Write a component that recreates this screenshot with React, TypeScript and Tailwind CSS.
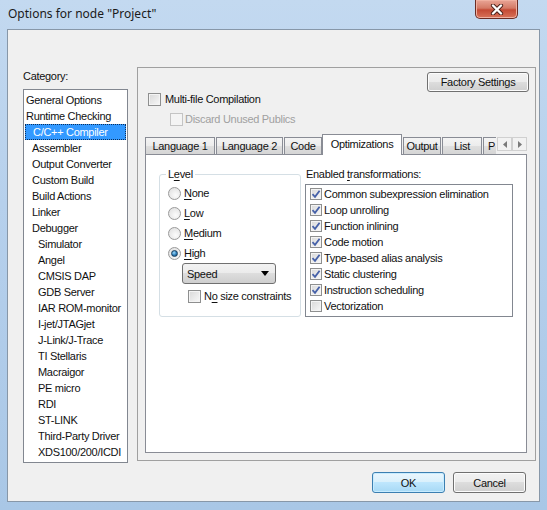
import React from 'react';

type TCategory = [string, number];

const CATEGORIES: TCategory[] = [
  ['General Options', 0],
  ['Runtime Checking', 0],
  ['C/C++ Compiler', 1],
  ['Assembler', 1],
  ['Output Converter', 1],
  ['Custom Build', 1],
  ['Build Actions', 1],
  ['Linker', 1],
  ['Debugger', 1],
  ['Simulator', 2],
  ['Angel', 2],
  ['CMSIS DAP', 2],
  ['GDB Server', 2],
  ['IAR ROM-monitor', 2],
  ['I-jet/JTAGjet', 2],
  ['J-Link/J-Trace', 2],
  ['TI Stellaris', 2],
  ['Macraigor', 2],
  ['PE micro', 2],
  ['RDI', 2],
  ['ST-LINK', 2],
  ['Third-Party Driver', 2],
  ['XDS100/200/ICDI', 2],
];

const INDENT = ['pl-[1px]', 'pl-[7px]', 'pl-[13px]'];

const TRANSFORMS: [string, boolean][] = [
  ['Common subexpression elimination', true],
  ['Loop unrolling', true],
  ['Function inlining', true],
  ['Code motion', true],
  ['Type-based alias analysis', true],
  ['Static clustering', true],
  ['Instruction scheduling', true],
  ['Vectorization', false],
];

const BTN =
  'rounded-[3px] border border-[#707070] bg-[linear-gradient(to_bottom,#f2f2f2_0%,#ebebeb_50%,#dddddd_50%,#cfcfcf_100%)] shadow-[inset_0_0_0_1px_#fcfcfc]';

function CheckBox({
  checked,
  disabled,
  small,
}: {
  checked?: boolean;
  disabled?: boolean;
  small?: boolean;
}) {
  return (
    <span
      className={`flex shrink-0 items-center justify-center border ${
        small ? 'size-[12px]' : 'size-[13px]'
      } ${
        disabled
          ? 'border-[#c4c4c4] bg-[#f4f4f4]'
          : 'border-[#8e8f8f] bg-[linear-gradient(135deg,#d8d8d8,#f8f8f8)] shadow-[inset_0_0_0_1px_#f4f4f4]'
      }`}
    >
      {checked ? (
        <svg height="10" viewBox="0 0 10 10" width="10">
          <path
            d="M1.5 5.2 L4 7.8 L8.6 1.8"
            fill="none"
            stroke="#4661a8"
            strokeWidth="1.8"
          />
        </svg>
      ) : null}
    </span>
  );
}

function Radio({ label, hot, checked }: { label: string; hot: number; checked?: boolean }) {
  return (
    <div className="flex h-[20px] items-center pl-[8px]">
      <span className="flex size-[13px] items-center justify-center rounded-full border border-[#9a9a9a] bg-[radial-gradient(circle_at_60%_65%,#fcfcfc,#dcdcdc)]">
        {checked ? (
          <span className="size-[7px] rounded-full border border-[#1b3f5e] bg-[radial-gradient(circle_at_40%_35%,#9fdcfb,#2b7bb8_55%,#0f3f66)]" />
        ) : null}
      </span>
      <span className="ml-[3px]">
        {label.slice(0, hot)}
        <u className="underline-offset-[2px]">{label.slice(hot, hot + 1)}</u>
        {label.slice(hot + 1)}
      </span>
    </div>
  );
}

function Tab({ label, w, active }: { label: string; w: string; active?: boolean }) {
  return active ? (
    <div
      className={`relative z-10 -mb-px flex h-[21px] shrink-0 justify-center border border-b-0 border-[#898c95] bg-white pt-[2px] ${w}`}
    >
      {label}
    </div>
  ) : (
    <div
      className={`flex h-[17px] shrink-0 items-center justify-center overflow-hidden whitespace-nowrap border border-b-0 border-[#898c95] bg-[linear-gradient(to_bottom,#f4f4f4_0%,#ececec_50%,#dfdfdf_50%,#d5d5d5_100%)] ${w}`}
    >
      {label}
    </div>
  );
}

function ArrowBtn({ dir }: { dir: 'l' | 'r' }) {
  return (
    <span className="flex h-[14px] w-[15px] items-center justify-center border border-[#d0d0d0] bg-[#f2f2f2]">
      <svg height="7" viewBox="0 0 4 7" width="4">
        <path d={dir === 'l' ? 'M4 0 L0 3.5 L4 7 Z' : 'M0 0 L4 3.5 L0 7 Z'} fill="#7a7a7a" />
      </svg>
    </span>
  );
}

export default function App() {
  return (
    <div className="h-[510px] w-[547px] overflow-hidden bg-[linear-gradient(to_bottom,#c3d9f0_0%,#b6d0ec_40%,#a9c7e6_100%)] font-['Liberation_Sans',Arial,sans-serif] text-[11px] leading-[14px] tracking-[-0.3px] text-[#111]">
      {/* title bar */}
      <div className="flex h-[29px] items-start justify-between">
        <div className="pt-[6px] pl-[8px] font-['Noto_Sans',sans-serif] text-[12px] leading-[16px] tracking-normal text-[#1a1a1a]">
          Options for node "Project"
        </div>
        <div className="mr-[29px] flex h-[19px] w-[43px] items-center justify-center rounded-b-[5px] border border-t-0 border-[#6b2c24] bg-[linear-gradient(to_bottom,#e9a596_0%,#d47a66_45%,#c44a35_55%,#d8735a_100%)] shadow-[inset_0_0_0_1px_#f0b0a0]">
          <svg height="11" viewBox="0 0 14 11" width="14">
            <path d="M3 1.5 L11 9.5 M11 1.5 L3 9.5" stroke="#4a2019" strokeLinecap="round" strokeWidth="4.2" />
            <path d="M3 1.5 L11 9.5 M11 1.5 L3 9.5" stroke="#ffffff" strokeLinecap="round" strokeWidth="2.4" />
          </svg>
        </div>
      </div>

      {/* client area */}
      <div className="mx-[7px] h-[473px] border border-[#8797a8] bg-[#f0f0f0]">
        <div className="flex h-[433px] items-start pl-[15px]">
          {/* category column */}
          <div className="w-[105px] shrink-0">
            <div className="mt-[39px] h-[14px]">Category:</div>
            <div className="mt-[6px] h-[374px] border border-[#828790] bg-white pt-[2px]">
              {CATEGORIES.map(([name, level]) =>
                name === 'C/C++ Compiler' ? (
                  <div
                    className="mx-px h-[16px] border border-dotted border-[#0c2f5a] bg-[#3399ff] pl-[7px] leading-[14px] text-white"
                    key={name}
                  >
                    {name}
                  </div>
                ) : (
                  <div className={`mx-px h-[16px] leading-[16px] ${INDENT[level]}`} key={name}>
                    {name}
                  </div>
                )
              )}
            </div>
          </div>

          {/* options panel */}
          <div className="mt-[37px] ml-[9px] h-[394px] w-[399px] shrink-0 border border-[#a0a0a0]">
            <div className="flex justify-end pt-[4px] pr-[6px]">
              <button className={`h-[20px] w-[102px] ${BTN}`} type="button">
                Factory Settings
              </button>
            </div>
            <div className="flex h-[14px] items-center pl-[10px]">
              <CheckBox />
              <span className="ml-[4px]">Multi-file Compilation</span>
            </div>
            <div className="mt-[6px] flex h-[14px] items-center pl-[32px] text-[#a0a0a0]">
              <CheckBox disabled />
              <span className="ml-[2px]">Discard Unused Publics</span>
            </div>

            {/* tabs */}
            <div className="mt-[8px] ml-[7px] w-[382px]">
              <div className="flex h-[20px] items-end">
                <Tab label="Language 1" w="w-[70px]" />
                <div className="w-px shrink-0" />
                <Tab label="Language 2" w="w-[67px]" />
                <div className="w-px shrink-0" />
                <Tab label="Code" w="w-[38px]" />
                <Tab active label="Optimizations" w="w-[80px]" />
                <div className="w-px shrink-0" />
                <Tab label="Output" w="w-[38px]" />
                <div className="w-px shrink-0" />
                <Tab label="List" w="w-[40px]" />
                <div className="w-px shrink-0" />
                <div className="flex h-[17px] w-[13px] shrink-0 items-center overflow-hidden border border-r-0 border-b-0 border-[#898c95] bg-[linear-gradient(to_bottom,#f4f4f4_0%,#ececec_50%,#dfdfdf_50%,#d5d5d5_100%)] pl-[4px]">
                  P
                </div>
                <div className="flex h-[20px] w-[31px] shrink-0 items-start bg-[#f0f0f0] pt-[3px] pl-px">
                  <ArrowBtn dir="l" />
                  <ArrowBtn dir="r" />
                </div>
              </div>

              <div className="h-[299px] border border-[#898c95] bg-white">
                <div className="flex items-start pt-[12px] pl-[13px]">
                  <fieldset className="w-[142px] rounded-[3px] border border-[#d5dfe5] pb-[13px]">
                    <legend className="ml-[6px] px-[2px] leading-[14px]">
                      L<u className="underline-offset-[2px]">e</u>vel
                    </legend>
                    <div className="mt-[2px]">
                      <Radio hot={0} label="None" />
                      <Radio hot={0} label="Low" />
                      <Radio hot={0} label="Medium" />
                      <Radio checked hot={0} label="High" />
                    </div>
                    <div className="ml-[22px] flex h-[21px] w-[94px] items-center justify-between rounded-[3px] border border-[#707070] bg-[linear-gradient(to_bottom,#f2f2f2_0%,#ebebeb_50%,#dddddd_50%,#cfcfcf_100%)] pr-[6px] pl-[4px]">
                      <span>Speed</span>
                      <svg height="5" viewBox="0 0 8 5" width="8">
                        <path d="M0 0 L8 0 L4 5 Z" fill="#000000" />
                      </svg>
                    </div>
                    <div className="mt-[5px] flex h-[14px] items-center pl-[28px]">
                      <CheckBox />
                      <span className="ml-[3px]">
                        N<u className="underline-offset-[2px]">o</u> size constraints
                      </span>
                    </div>
                  </fieldset>

                  <div className="ml-[4px]">
                    <div className="h-[14px] pl-px">
                      Enabled <u className="underline-offset-[2px]">t</u>ransformations:
                    </div>
                    <div className="mt-[3px] h-[133px] w-[208px] border border-[#828790] bg-white pt-px">
                      {TRANSFORMS.map(([name, on]) => (
                        <div className="flex h-[16px] items-center pl-[4px]" key={name}>
                          <CheckBox checked={on} small />
                          <span className="ml-[2px]">{name}</span>
                        </div>
                      ))}
                    </div>
                  </div>
                </div>
              </div>
            </div>
          </div>
        </div>

        {/* bottom buttons */}
        <div className="mt-[9px] flex justify-end gap-[8px] pr-[13px]">
          <button
            className="h-[21px] w-[73px] rounded-[3px] border border-[#3c7fb1] bg-[linear-gradient(to_bottom,#eaf6fd_0%,#d9f0fc_50%,#bee6fd_50%,#a7d9f5_100%)] shadow-[inset_0_0_0_1px_#c8ecff]"
            type="button"
          >
            OK
          </button>
          <button className={`h-[21px] w-[73px] ${BTN}`} type="button">
            Cancel
          </button>
        </div>
      </div>
    </div>
  );
}
